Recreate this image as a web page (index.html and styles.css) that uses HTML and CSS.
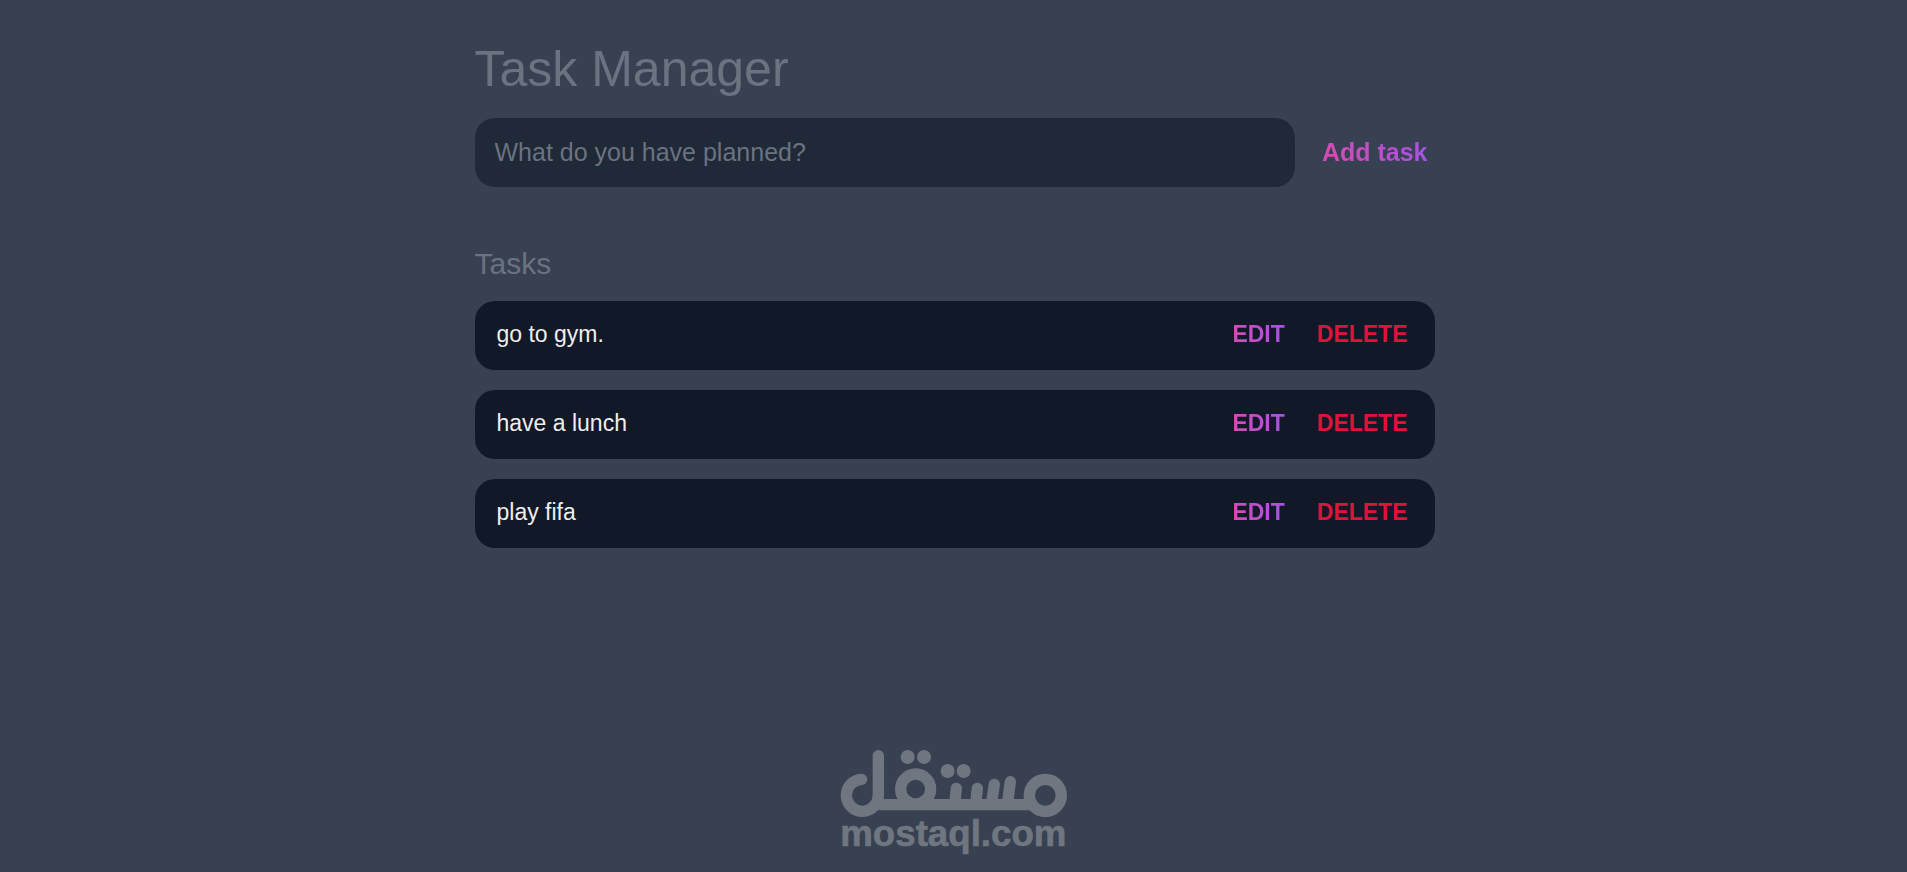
FILE: index.html
```html
<!DOCTYPE html>
<html lang="en">
<head>
  <meta charset="UTF-8">
  <meta name="viewport" content="width=device-width, initial-scale=1">
  <title>Task Manager</title>
  <link rel="stylesheet" href="styles.css">
</head>
<body>
  <header class="header">
    <h1 class="title">Task Manager</h1>
    <form class="task-form">
      <input class="task-input" type="text" placeholder="What do you have planned?" aria-label="New task">
      <button class="button button-add" type="submit">Add task</button>
    </form>
  </header>
  <main class="tasks">
    <h2 class="subtitle">Tasks</h2>
    <ul class="task-list">
      <li class="task">
        <input class="task-text" type="text" value="go to gym." aria-label="Task 1" readonly>
        <button class="button button-edit" type="button">EDIT</button>
        <button class="button button-delete" type="button">DELETE</button>
      </li>
      <li class="task">
        <input class="task-text" type="text" value="have a lunch" aria-label="Task 2" readonly>
        <button class="button button-edit" type="button">EDIT</button>
        <button class="button button-delete" type="button">DELETE</button>
      </li>
      <li class="task">
        <input class="task-text" type="text" value="play fifa" aria-label="Task 3" readonly>
        <button class="button button-edit" type="button">EDIT</button>
        <button class="button button-delete" type="button">DELETE</button>
      </li>
    </ul>
  </main>
  <footer class="brand">
    <svg class="brand-logo" viewBox="60 60 681 320" fill="none" stroke="currentColor" stroke-width="34" stroke-linecap="round">
      <path d="M125 148A48 48 0 1 0 175 196V77"/>
      <circle cx="287" cy="177" r="45"/>
      <circle cx="676" cy="196" r="48"/>
      <path d="M176 224H632" stroke-linecap="butt"/>
      <path d="M409 175L404 224M472 175L467 224M523 163L514 224M571 155L562 224"/>
      <g fill="currentColor" stroke="none">
        <circle cx="263" cy="81" r="21"/>
        <circle cx="312" cy="81" r="21"/>
        <circle cx="383" cy="123" r="21"/>
        <circle cx="431" cy="123" r="21"/>
      </g>
      <text class="brand-name" x="400" y="349" text-anchor="middle">mostaql.com</text>
    </svg>
  </footer>
</body>
</html>
```
FILE: styles.css
```css
:root {
  --dark: #384151;
  --darker: #1f2937;
  --darkest: #111827;
  --grey: #6b7280;
  --pink: #d84baf;
  --purple: #9f55e6;
  --light: #eeeeee;
}

* {
  box-sizing: border-box;
  margin: 0;
  font-family: "Liberation Sans", Arial, sans-serif;
}

body {
  display: flex;
  flex-direction: column;
  min-height: 100vh;
  background: var(--dark);
  color: #fff;
}

.header,
.tasks {
  width: 100%;
  max-width: 1000px;
  margin: 0 auto;
  padding: 0 19px 0 21px;
}

.header {
  padding-top: 40px;
}

.title {
  margin-bottom: 20px;
  color: var(--grey);
  font-size: 50px;
  font-weight: 400;
  line-height: 58px;
}

.task-form {
  display: flex;
  gap: 20px;
}

.task-input {
  flex: 1;
  min-width: 0;
  padding: 20px;
  border: 0;
  border-radius: 20px;
  outline: none;
  background: var(--darker);
  color: var(--light);
  font-size: 25px;
  line-height: 29px;
}

.task-input::placeholder {
  color: var(--grey);
}

.button {
  padding: 0 7px 2px;
  border: 0;
  background: none;
  font-size: 23px;
  font-weight: 700;
  line-height: 26px;
  cursor: pointer;
}

.button-add,
.button-edit {
  background-image: linear-gradient(to right, var(--pink), var(--purple));
  background-clip: text;
  -webkit-background-clip: text;
  color: transparent;
}

.button-add {
  font-size: 25px;
}

.button-delete {
  color: crimson;
}

.tasks {
  padding-top: 59px;
}

.subtitle {
  margin-bottom: 20px;
  color: var(--grey);
  font-size: 30px;
  font-weight: 400;
  line-height: 35px;
}

.task-list {
  display: flex;
  flex-direction: column;
  gap: 20px;
  padding: 0;
  list-style: none;
}

.task {
  display: flex;
  gap: 18px;
  padding: 19px 20px 21px;
  border-radius: 20px;
  background: var(--darkest);
}

.task-text {
  flex: 1;
  min-width: 0;
  height: 29px;
  padding: 0 2px;
  border: 0;
  outline: none;
  background: none;
  color: var(--light);
  font-size: 23px;
}

.brand {
  display: flex;
  justify-content: center;
  margin-top: auto;
  padding: 40px 0 15px;
  color: #6f7680;
}

.brand-logo {
  width: 227px;
}

.brand-name {
  fill: currentColor;
  font-size: 110px;
  font-weight: 700;
  stroke-width: 2px;
  stroke-linejoin: round;
}
```
